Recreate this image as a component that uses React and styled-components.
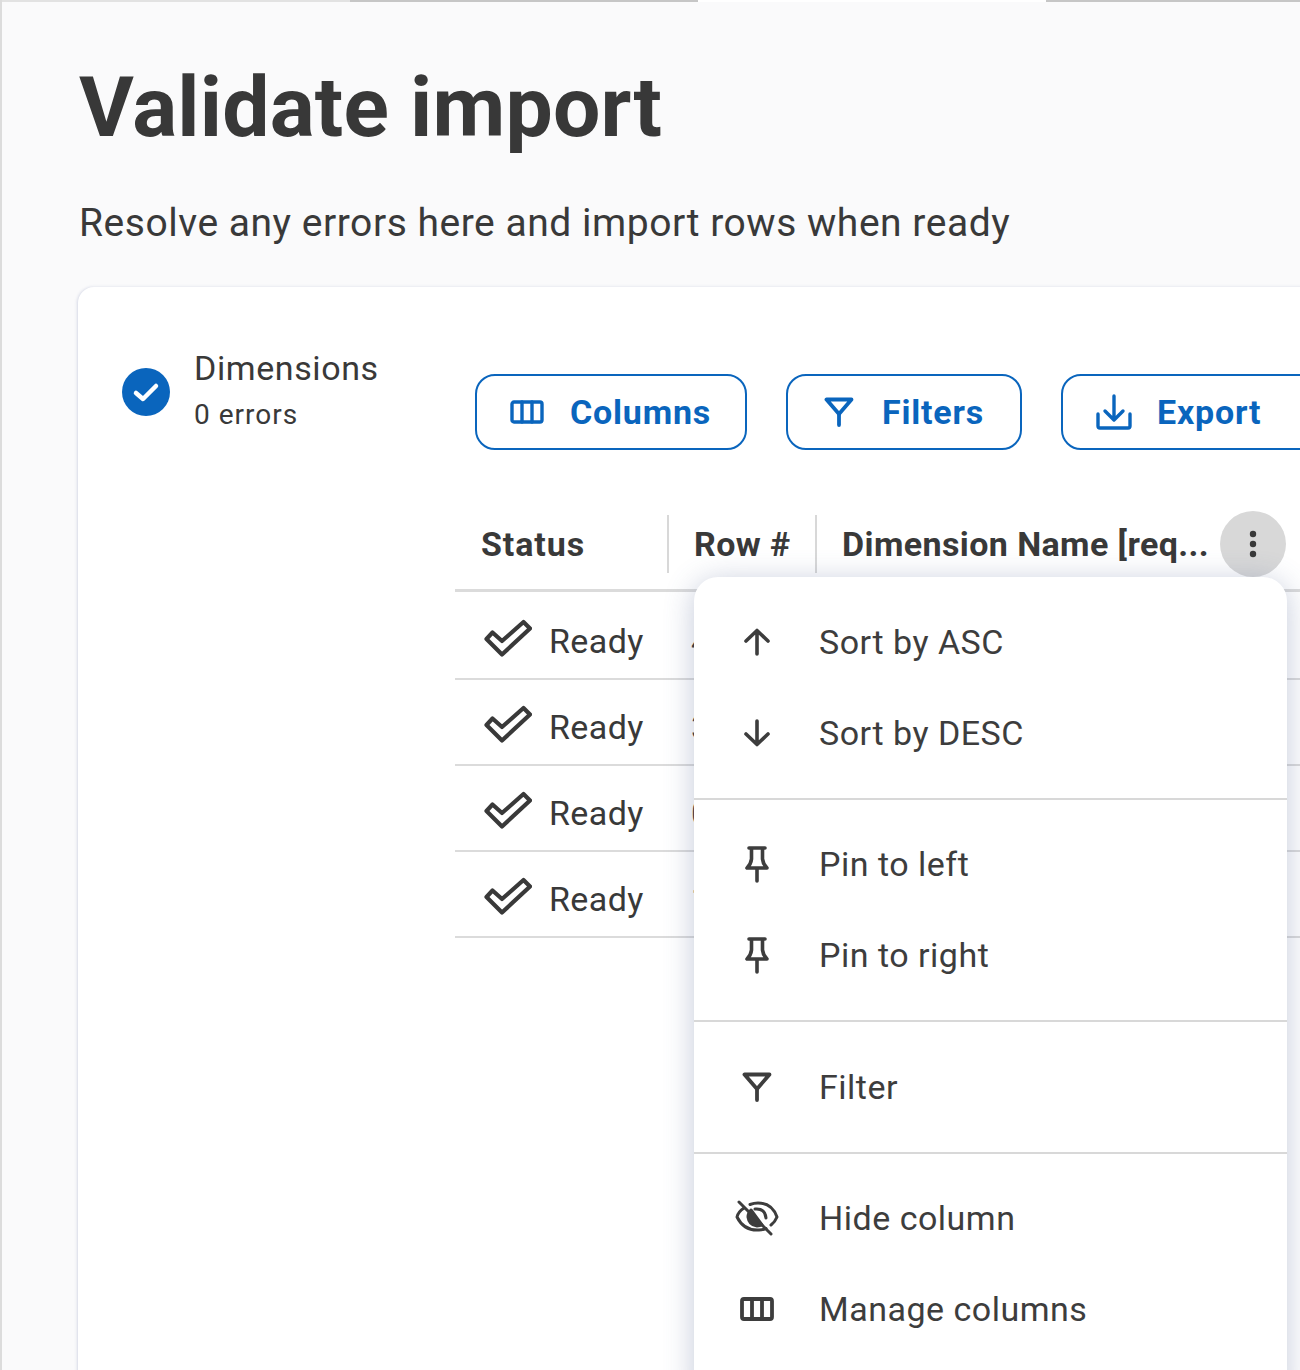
import React from "react";
import styled, { createGlobalStyle } from "styled-components";

const GlobalStyle = createGlobalStyle`
    html, body {
        margin: 0;
        padding: 0;
        width: 1300px;
        height: 1370px;
        overflow: hidden;
        background: #fafafb;
    }
    * { box-sizing: border-box; }
    body {
        font-family: "Roboto", "Noto Sans", sans-serif;
        color: #393939;
    }
`;

const Page = styled.div`
    width: 1300px;
    height: 1370px;
    overflow: hidden;
    display: flex;
    flex-direction: column;
    background: #fafafb;
    border-left: 2px solid #dcdcdc;
`;

const Steps = styled.div`
    display: flex;
    height: 2px;
    flex-shrink: 0;
    margin-left: -2px;
`;

const Step = styled.div`
    width: ${(p) => p.$width}px;
    background: ${(p) => p.$color};
`;

const Content = styled.div`
    padding: 60px 0 0 76px;
    display: flex;
    flex-direction: column;
`;

const Title = styled.h1`
    margin: 0 0 0 1px;
    font-size: 84px;
    line-height: 92px;
    font-weight: 700;
    color: #383838;
    letter-spacing: 0.2px;
    white-space: nowrap;
`;

const Subtitle = styled.p`
    margin: 46px 0 0 1px;
    font-size: 39px;
    line-height: 46px;
    font-weight: 400;
    letter-spacing: 0.53px;
    white-space: nowrap;
`;

const Card = styled.div`
    margin-top: 41px;
    width: 1400px;
    height: 1200px;
    display: flex;
    background: #fff;
    border-radius: 16px;
    box-shadow: -1px 0 3px rgba(90, 105, 160, 0.22);
`;

const Sidebar = styled.div`
    width: 377px;
    flex-shrink: 0;
    padding: 59px 0 0 44px;
    display: flex;
    gap: 24px;
    align-items: flex-start;
`;

const StepIcon = styled.svg`
    width: 48px;
    height: 48px;
    margin-top: 22px;
    flex-shrink: 0;
`;

const StepText = styled.div`
    display: flex;
    flex-direction: column;
`;

const StepName = styled.span`
    font-size: 34px;
    line-height: 44px;
    letter-spacing: 0.6px;
`;

const StepErrors = styled.span`
    font-size: 28px;
    line-height: 36px;
    margin-top: 7px;
    letter-spacing: 1px;
`;

const Main = styled.div`
    position: relative;
    flex: 1;
    padding-top: 87px;
`;

const Toolbar = styled.div`
    display: flex;
    gap: 39px;
    padding-left: 20px;
`;

const ToolButton = styled.button`
    width: ${(p) => p.$width}px;
    height: 76px;
    flex-shrink: 0;
    display: flex;
    align-items: center;
    gap: ${(p) => p.$gap}px;
    padding: 0 0 0 ${(p) => p.$pad}px;
    background: #fff;
    border: 2px solid #0a65bd;
    border-radius: 20px;
    color: #0a65bd;
    font-family: inherit;
    font-size: 34px;
    font-weight: 700;
    letter-spacing: 0.8px;
`;

const HeaderRow = styled.div`
    margin-top: 60px;
    height: 82px;
    display: grid;
    grid-template-columns: 214px 148px 1fr;
    border-bottom: 3px solid #dbdbdb;
`;

const HeaderCell = styled.div`
    height: 58px;
    margin-top: 5px;
    display: flex;
    align-items: center;
    padding-left: 25px;
    font-size: 34px;
    font-weight: 700;
    letter-spacing: 0.4px;
    color: #393939;
    border-right: ${(p) => (p.$divider ? "2px solid #d8d8d8" : "none")};
    &:first-child {
        padding-left: 26px;
        letter-spacing: 0.9px;
    }
`;

const HeaderLabel = styled.span`
    width: 365px;
    white-space: nowrap;
    flex-shrink: 0;
`;

const Kebab = styled.button`
    margin-left: 13px;
    width: 66px;
    height: 66px;
    flex-shrink: 0;
    border: none;
    border-radius: 50%;
    background: #d8d8d8;
    display: flex;
    align-items: center;
    justify-content: center;
    padding: 0;
`;

const Rows = styled.div`
    padding-top: 2px;
`;

const Row = styled.div`
    height: 86px;
    padding-top: 10px;
    display: grid;
    grid-template-columns: 214px 148px 1fr;
    align-items: center;
    border-bottom: 2px solid #dbdbdb;
`;

const StatusCell = styled.div`
    display: flex;
    align-items: center;
    gap: 17px;
    padding-left: 29px;
    font-size: 34px;
    letter-spacing: 0.4px;
    svg {
        margin-top: -6px;
    }
`;

const RowNumber = styled.div`
    padding-left: 22px;
    font-size: 34px;
`;

const Menu = styled.div`
    position: absolute;
    left: 239px;
    top: 290px;
    width: 593px;
    height: 830px;
    background: #fff;
    border-radius: 24px;
    box-shadow: 0 4px 30px rgba(70, 90, 140, 0.32);
`;

const MenuGroup = styled.div`
    padding: 19.25px 0;
    border-bottom: ${(p) => (p.$last ? "none" : "2px solid #d8d8d8")};
`;

const MenuItem = styled.div`
    height: 91px;
    display: flex;
    align-items: center;
    font-size: 34px;
    letter-spacing: 0.5px;
    color: #3d3d3d;
`;

const MenuIcon = styled.span`
    width: 125px;
    flex-shrink: 0;
    display: flex;
    justify-content: center;
`;

const Line = styled.svg`
    display: block;
    fill: none;
    stroke: currentColor;
    stroke-width: ${(p) => p.$stroke || 3.4};
    stroke-linecap: round;
    stroke-linejoin: round;
    flex-shrink: 0;
`;

const DoneCheck = () => (
    <StepIcon viewBox="0 0 48 48">
        <circle cx="24" cy="24" r="24" fill="#0a65bd" />
        <path d="M14 25 L21 31 L34 18" fill="none" stroke="#fff" strokeWidth="4.5" strokeLinecap="round" strokeLinejoin="round" />
    </StepIcon>
);

const ColumnsIcon = ({ stroke = 3.4 }) => (
    <Line width="34" height="24" viewBox="0 0 34 24" $stroke={stroke}>
        <rect x="2" y="2" width="30" height="20" rx="2" />
        <path d="M12 2 V22 M22 2 V22" />
    </Line>
);

const FunnelIcon = () => (
    <Line width="30" height="30" viewBox="0 0 30 30" $stroke={3.8}>
        <path d="M2.5 2.5 H27.5 L15 17 Z" strokeLinecap="butt" />
        <path d="M15 17 V28" />
    </Line>
);

const ExportIcon = () => (
    <Line width="36" height="36" viewBox="0 0 36 36">
        <path d="M2 20 V32 A2 2 0 0 0 4 34 H32 A2 2 0 0 0 34 32 V20" />
        <path d="M18 2 V25 M9 17 L18 26 L27 17" />
    </Line>
);

const VerticalDots = () => (
    <svg width="8" height="28" viewBox="0 0 8 28">
        <circle cx="4" cy="4" r="3.2" fill="#393939" />
        <circle cx="4" cy="14" r="3.2" fill="#393939" />
        <circle cx="4" cy="24" r="3.2" fill="#393939" />
    </svg>
);

const ReadyCheck = () => (
    <Line width="48" height="38" viewBox="0 0 48 38" $stroke={4.2}>
        <path d="M2.5 20 L8.5 13.5 L18 22 L39.5 3 L46 9.5 L18 35.5 Z" />
    </Line>
);

const ArrowUp = () => (
    <Line width="30" height="28" viewBox="0 0 30 28" $stroke={3.6}>
        <path d="M15 26 V3 M4 13 L15 2.5 L26 13" />
    </Line>
);

const ArrowDown = () => (
    <Line width="30" height="28" viewBox="0 0 30 28" $stroke={3.6}>
        <path d="M15 2 V25 M4 15 L15 25.5 L26 15" />
    </Line>
);

const PinIcon = () => (
    <Line width="24" height="37" viewBox="0 0 24 37" $stroke={3.6}>
        <path d="M4 2 H20 M6.5 2 V13 Q6 18 2 22 H22 Q18 18 17.5 13 V2" />
        <path d="M12 23 V35" />
    </Line>
);

const EyeOffIcon = () => (
    <Line width="44" height="36" viewBox="0 0 44 36" $stroke={3}>
        <path d="M9 8 Q3 12 2 17 Q9 31 24 30 Q28 30 31 28.5 M15 4.5 Q19 3 23 3 Q37 3 42 17 Q40 22 36 25" />
        <path d="M16 10 Q13 13 13 17 Q14 25 22 26 Q25 26 27 25 Z" fill="currentColor" />
        <path d="M20 9 Q30 8 31 18" />
        <path d="M4 2 L36 34" />
    </Line>
);

const menuGroups = [
    [
        { icon: <ArrowUp />, label: "Sort by ASC" },
        { icon: <ArrowDown />, label: "Sort by DESC" },
    ],
    [
        { icon: <PinIcon />, label: "Pin to left" },
        { icon: <PinIcon />, label: "Pin to right" },
    ],
    [{ icon: <FunnelIcon />, label: "Filter" }],
    [
        { icon: <EyeOffIcon />, label: "Hide column" },
        { icon: <ColumnsIcon stroke={3.8} />, label: "Manage columns" },
    ],
];

const rows = ["4", "3", "0", "1"];

export default function App() {
    return (
        <Page>
            <GlobalStyle />
            <Steps>
                <Step $width={350} $color="#e2e2e2" />
                <Step $width={348} $color="#c6c6c6" />
                <Step $width={348} $color="#ffffff" />
                <Step $width={254} $color="#c6c6c6" />
            </Steps>
            <Content>
                <Title>Validate import</Title>
                <Subtitle>Resolve any errors here and import rows when ready</Subtitle>
                <Card>
                    <Sidebar>
                        <DoneCheck />
                        <StepText>
                            <StepName>Dimensions</StepName>
                            <StepErrors>0 errors</StepErrors>
                        </StepText>
                    </Sidebar>
                    <Main>
                        <Toolbar>
                            <ToolButton $width={272} $pad={33} $gap={26}>
                                <ColumnsIcon />
                                Columns
                            </ToolButton>
                            <ToolButton $width={236} $pad={36} $gap={28}>
                                <FunnelIcon />
                                Filters
                            </ToolButton>
                            <ToolButton $width={260} $pad={33} $gap={25}>
                                <ExportIcon />
                                Export
                            </ToolButton>
                        </Toolbar>
                        <HeaderRow>
                            <HeaderCell $divider>Status</HeaderCell>
                            <HeaderCell $divider>Row #</HeaderCell>
                            <HeaderCell>
                                <HeaderLabel>Dimension Name [req...</HeaderLabel>
                                <Kebab>
                                    <VerticalDots />
                                </Kebab>
                            </HeaderCell>
                        </HeaderRow>
                        <Rows>
                            {rows.map((number, index) => (
                                <Row key={index}>
                                    <StatusCell>
                                        <ReadyCheck />
                                        Ready
                                    </StatusCell>
                                    <RowNumber>{number}</RowNumber>
                                </Row>
                            ))}
                        </Rows>
                        <Menu>
                            {menuGroups.map((group, index) => (
                                <MenuGroup key={index} $last={index === menuGroups.length - 1}>
                                    {group.map((item) => (
                                        <MenuItem key={item.label}>
                                            <MenuIcon>{item.icon}</MenuIcon>
                                            {item.label}
                                        </MenuItem>
                                    ))}
                                </MenuGroup>
                            ))}
                        </Menu>
                    </Main>
                </Card>
            </Content>
        </Page>
    );
}
